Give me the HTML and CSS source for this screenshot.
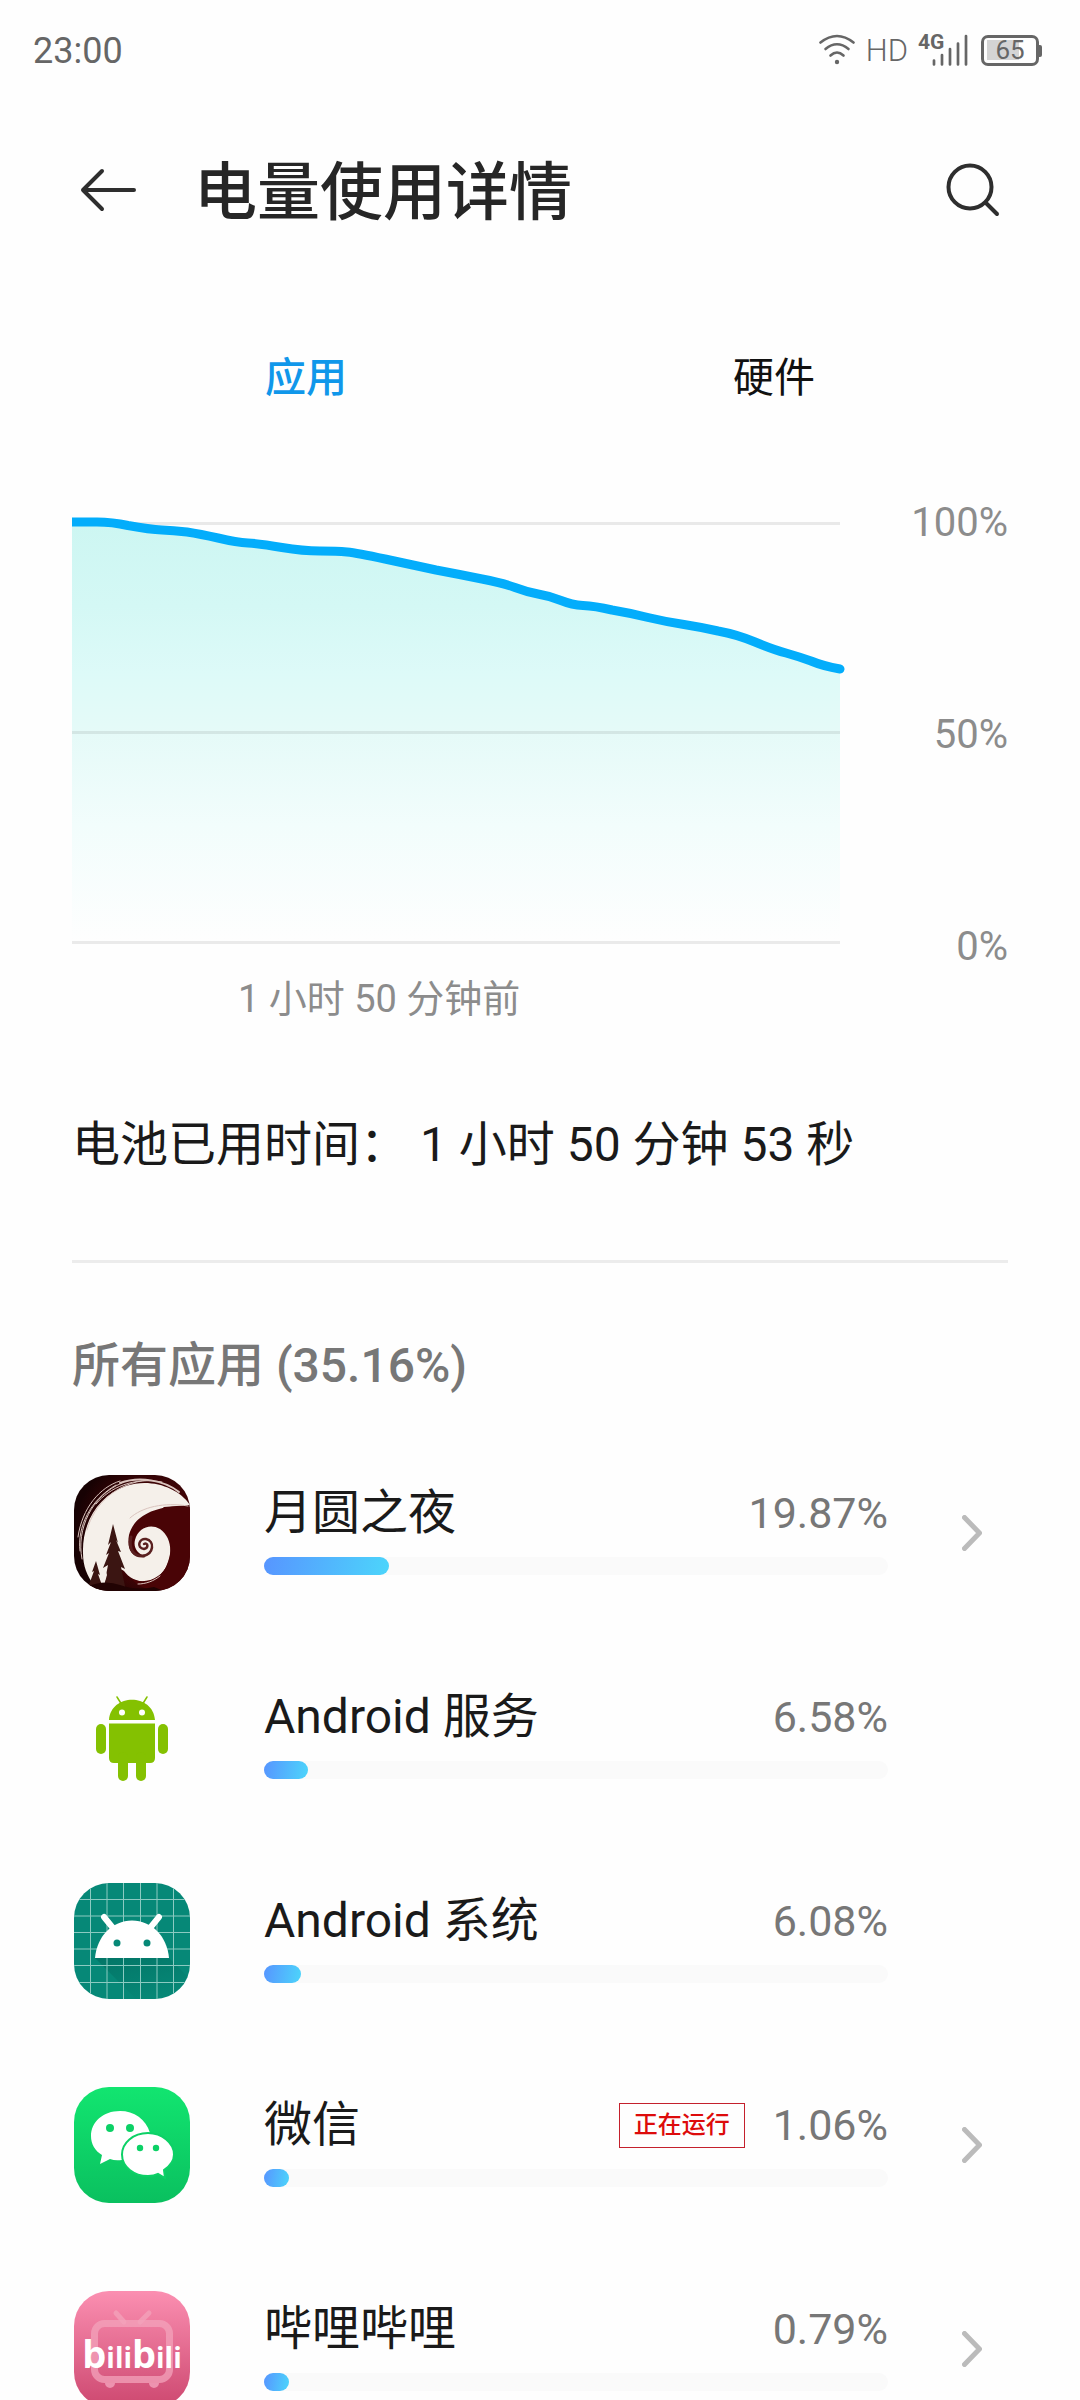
FILE: index.html
```html
<!DOCTYPE html>
<html lang="zh-CN">
<head>
<meta charset="utf-8">
<meta name="viewport" content="width=device-width, initial-scale=1">
<title>电量使用详情</title>
<link rel="stylesheet" href="styles.css">
</head>
<body>
<div class="screen">
  <div class="status">
    <span class="status-time">23:00</span>
    <div class="status-icons">
      <svg class="wifi" viewBox="0 0 36 32" aria-label="Wi-Fi">
        <g fill="none" stroke="#666" stroke-width="2.6" stroke-linecap="round">
          <path d="M1.500 8.500Q18-4.500 34.500 8.500"/><path d="M6.500 15Q18 5.500 29.500 15"/><path d="M11.500 21.500Q18 15.500 24.500 21.500"/>
        </g>
        <circle cx="18" cy="28" r="2.200" fill="#666"/>
      </svg>
      <span class="hd">HD</span>
      <div class="signal">
        <span class="network">4G</span>
        <svg class="bars" viewBox="0 0 36 32" aria-hidden="true">
          <path d="M2 26.500V30.500M10 21V30.500M18 15V30.500M26 9.500V30.500M34 2V30.500" stroke="#666" stroke-width="2.700" stroke-linecap="round"/>
        </svg>
      </div>
      <div class="battery"><span class="battery-level">65</span></div>
    </div>
  </div>

  <header class="header">
    <button class="icon-button" type="button" aria-label="返回">
      <svg class="back-icon" viewBox="0 0 56 44"><path d="M22 3L3 22L22 41M3 22H54" fill="none" stroke="#2e2e2e" stroke-width="4" stroke-linecap="round" stroke-linejoin="round"/></svg>
    </button>
    <h1 class="title">电量使用详情</h1>
    <button class="icon-button" type="button" aria-label="搜索">
      <svg class="search-icon" viewBox="0 0 54 54"><g fill="none" stroke="#2e2e2e" stroke-width="4" stroke-linecap="round"><circle cx="24" cy="24" r="21.500"/><path d="M40 40L51 51"/></g></svg>
    </button>
  </header>

  <nav class="tabs">
    <button class="tab tab-active" type="button">应用</button>
    <button class="tab" type="button">硬件</button>
  </nav>

  <main class="content">
    <section class="chart">
      <div class="chart-plot">
        <svg class="chart-svg" viewBox="0 0 768 445" role="img" aria-label="电量曲线">
          <defs>
            <linearGradient id="area" gradientUnits="userSpaceOnUse" x1="0" y1="22" x2="0" y2="442">
              <stop offset="0" stop-color="#cdf6f2"/><stop offset=".2" stop-color="#d4f8f5"/><stop offset=".36" stop-color="#ddfaf8"/><stop offset=".5" stop-color="#e5faf8"/><stop offset=".72" stop-color="#f2fdfc"/><stop offset="1" stop-color="#fefefe"/>
            </linearGradient>
            <clipPath id="plot"><rect x="0" y="0" width="780" height="445"/></clipPath>
          </defs>
          <path d="M0 23.500H768" stroke="#e9e9e9" stroke-width="3"/>
          <path fill="url(#area)" d="M0 22H25Q40 22 56 25.500Q78 29.500 90 30Q101 30.500 115 32Q128 34 146 38Q165 42.500 176 43Q188 43.500 210 47.500Q231 51 248 51Q265 51 275 52Q285 53 313 59Q341 65 364 70Q388 74.500 410 79Q431 83 443 87.500Q455 92 466 94Q478 96 489 100.500Q500 105 511 105.500Q523 106 540 110Q558 113 576 117.500Q595 122 612 124.500Q628 127 646 131Q665 134.500 683 142Q701 149.500 714 153Q728 157 739 161Q751 166 768 169V442H0Z"/>
          <path d="M0 232.500H768M0 442.500H768" stroke="#000" stroke-opacity=".08" stroke-width="3"/>
          <path clip-path="url(#plot)" fill="none" stroke="#03adfb" stroke-width="9" stroke-linecap="round" d="M0 22H25Q40 22 56 25.500Q78 29.500 90 30Q101 30.500 115 32Q128 34 146 38Q165 42.500 176 43Q188 43.500 210 47.500Q231 51 248 51Q265 51 275 52Q285 53 313 59Q341 65 364 70Q388 74.500 410 79Q431 83 443 87.500Q455 92 466 94Q478 96 489 100.500Q500 105 511 105.500Q523 106 540 110Q558 113 576 117.500Q595 122 612 124.500Q628 127 646 131Q665 134.500 683 142Q701 149.500 714 153Q728 157 739 161Q751 166 768 169"/>
        </svg>
        <p class="chart-caption">1 小时 50 分钟前</p>
      </div>
      <div class="chart-scale"><span>100%</span><span>50%</span><span>0%</span></div>
    </section>

    <p class="duration">电池已用时间： 1 小时 50 分钟 53 秒</p>

    <section class="apps">
      <h2 class="apps-title">所有应用 (35.16%)</h2>
      <ul class="app-list">
        <li>
          <a class="app" href="#night">
            <svg class="app-icon" viewBox="0 0 116 116" aria-hidden="true">
              <defs>
                <clipPath id="round"><rect width="116" height="116" rx="35"/></clipPath>
                <radialGradient id="wine" cx=".7" cy=".5" r=".7"><stop offset="0" stop-color="#5c0508"/><stop offset=".6" stop-color="#3f0406"/><stop offset="1" stop-color="#170203"/></radialGradient>
              </defs>
              <g clip-path="url(#round)">
                <rect width="116" height="116" fill="url(#wine)"/>
                <path fill="#f5f0ea" d="M116 30C104 12 76 3 52 11C24 21 8 48 9 78C9 91 13 101 20 110L38 108Q44 90 50 96C60 110 82 111 92 92C106 60 86 42 68 50L90 32Z"/>
                <path fill="#490406" d="M116 32C84 29 60 40 55 60C52 76 60 84 71 81C64 79 59 73 61 65C64 53 76 48 86 54C101 64 99 91 84 101C76 107 64 108 57 103Q66 116 90 116H116Z"/>
                <g fill="none" stroke="#5a2020" stroke-linecap="round">
                  <path stroke-width="3" d="M57 62C54 76 61 82 70 81"/>
                  <path stroke-width="2.500" d="M69 81C80 79 81 66 72 64C65 63 62 73 70 74C75 73 74 67 70 69"/>
                </g>
                <g fill="none" stroke="#d9c3bd" stroke-width="1" stroke-linecap="round">
                  <path d="M8 84C2 54 18 20 48 8M6 76C3 52 16 25 42 10M13 55C20 29 42 8 74 5M22 29C36 12 60 2 88 7M4 62C8 33 26 12 46 6M56 43C68 32 90 27 114 31M64 109C72 109 80 106 86 101"/>
                  <path stroke-width="2" d="M46 8C65 1 90 5 105 17"/>
                </g>
                <path fill="#3b1512" d="M39 49L34 70L37 67L32 80L35 78L29 93L34 90L29 116H52L47 92L51 94L44 76L47 77L42 65L44 68ZM22 86L18 97L20 96L16 107L12 116H30L24 99L26 100Z"/>
                <path fill="#f5f0ea" d="M26 100L30 110L33 100L31 94Z"/>
                <path fill="#210303" d="M12 112Q30 104 46 110T80 112L90 116H8Z"/>
              </g>
            </svg>
            <div class="app-body">
              <div class="app-line"><span class="app-name">月圆之夜</span><span class="app-share">19.87%</span></div>
              <div class="track"><div class="fill" style="width:20%"></div></div>
            </div>
            <svg class="chevron" viewBox="0 0 20 36" aria-hidden="true"><path d="M2.500 2.500L17.500 18L2.500 33.500"/></svg>
          </a>
        </li>
        <li class="app">
          <svg class="app-icon" viewBox="0 0 116 116" aria-hidden="true">
            <g fill="#84c101">
              <path d="M35 41C37 14 79 14 81 41ZM35 44.500H81V79Q81 84 76 84H40Q35 84 35 79Z"/>
              <rect x="22" y="45" width="10" height="30" rx="5"/><rect x="84" y="45" width="10" height="30" rx="5"/>
              <rect x="44" y="73" width="10" height="29" rx="5"/><rect x="62" y="73" width="10" height="29" rx="5"/>
              <path d="M43 18L48 26M73 18L68 26" stroke="#84c101" stroke-width="1.500" stroke-linecap="round"/>
            </g>
            <circle cx="48" cy="33.500" r="3" fill="#fff"/><circle cx="68" cy="33.500" r="3" fill="#fff"/>
          </svg>
          <div class="app-body">
            <div class="app-line"><span class="app-name">Android 服务</span><span class="app-share">6.58%</span></div>
            <div class="track"><div class="fill" style="width:7%"></div></div>
          </div>
        </li>
        <li class="app">
          <svg class="app-icon" viewBox="0 0 116 116" aria-hidden="true">
            <defs><linearGradient id="shade" x1="0" y1="0" x2=".6" y2="1"><stop offset="0" stop-color="#00695c" stop-opacity=".6"/><stop offset="1" stop-color="#00695c" stop-opacity="0"/></linearGradient></defs>
            <g clip-path="url(#round)">
              <rect width="116" height="116" fill="#068877"/>
              <path d="M21 75L62 116H116V96L95 75Z" fill="url(#shade)"/>
              <path d="M16.500 0V116M33 0V116M49.500 0V116M66.500 0V116M83 0V116M99.500 0V116M0 16.500H116M0 33H116M0 49.500H116M0 66H116M0 82.500H116M0 99.500H116" stroke="#8bcac1" stroke-width="1"/>
              <path d="M21 75C23 53 38 38 58 37.500C78 38 93 53 95 75Z" fill="#fff"/>
              <path d="M30 34L39 45M85 34L76 45" stroke="#fff" stroke-width="6" stroke-linecap="round"/>
              <circle cx="43" cy="60" r="3.500" fill="#068877"/><circle cx="73" cy="60" r="3.500" fill="#068877"/>
            </g>
          </svg>
          <div class="app-body">
            <div class="app-line"><span class="app-name">Android 系统</span><span class="app-share">6.08%</span></div>
            <div class="track"><div class="fill" style="width:6%"></div></div>
          </div>
        </li>
        <li>
          <a class="app" href="#wechat">
            <svg class="app-icon" viewBox="0 0 116 116" aria-hidden="true">
              <defs><linearGradient id="green" x1="0" y1="0" x2="0" y2="1"><stop offset="0" stop-color="#12e570"/><stop offset="1" stop-color="#0ac05f"/></linearGradient></defs>
              <rect width="116" height="116" rx="35" fill="url(#green)"/>
              <path fill="#fff" d="M46 24C29 24 17 35 17 49C17 57 21 64 28 68L26 77L36 72Q41 74 48 73L76 46C72 32 60 24 46 24Z"/>
              <path fill="#fff" stroke="#0cd166" stroke-width="2" d="M74 46C59 46 48 56 48 67.500C48 80 60 89 74 89Q80 89 84 87L91 91L90 83C96 79 100 74 100 67.500C100 56 88 46 74 46Z"/>
              <g fill="#0cd166"><circle cx="36" cy="41" r="4"/><circle cx="56" cy="41" r="4"/><circle cx="66" cy="61" r="3.200"/><circle cx="82" cy="61" r="3.200"/></g>
            </svg>
            <div class="app-body">
              <div class="app-line"><span class="app-name">微信</span><span class="app-tag">正在运行</span><span class="app-share">1.06%</span></div>
              <div class="track"><div class="fill" style="width:4%"></div></div>
            </div>
            <svg class="chevron" viewBox="0 0 20 36" aria-hidden="true"><path d="M2.500 2.500L17.500 18L2.500 33.500"/></svg>
          </a>
        </li>
        <li>
          <a class="app" href="#bilibili">
            <svg class="app-icon" viewBox="0 0 116 116" aria-hidden="true">
              <defs><linearGradient id="pink" x1="0" y1="0" x2="0" y2="1"><stop offset="0" stop-color="#fb8fb1"/><stop offset="1" stop-color="#cd4870"/></linearGradient></defs>
              <rect width="116" height="116" rx="35" fill="url(#pink)"/>
              <g fill="none" stroke="#f3a3bb" stroke-opacity=".75">
                <rect x="20.500" y="32.500" width="75" height="56" rx="10" stroke-width="7"/>
                <path d="M42 22L50 31M75 22L66 31" stroke-width="5" stroke-linecap="round"/>
              </g>
              <path d="M31 92A5 5 0 0 0 41 92ZM75 92A5 5 0 0 0 85 92Z" fill="#f3a3bb" fill-opacity=".8"/>
              <text class="bili-word" x="58" y="77" text-anchor="middle"><tspan class="bili-tall">b</tspan>ili<tspan class="bili-tall">b</tspan>ili</text>
            </svg>
            <div class="app-body">
              <div class="app-line"><span class="app-name">哔哩哔哩</span><span class="app-share">0.79%</span></div>
              <div class="track"><div class="fill" style="width:4%"></div></div>
            </div>
            <svg class="chevron" viewBox="0 0 20 36" aria-hidden="true"><path d="M2.500 2.500L17.500 18L2.500 33.500"/></svg>
          </a>
        </li>
      </ul>
    </section>
  </main>
</div>
</body>
</html>
```
FILE: styles.css
```css
* { box-sizing: border-box; }

body {
  margin: 0;
  background: #fefefe;
  color: #1a1a1a;
  font-family: Roboto, "Noto Sans CJK SC", sans-serif;
}

h1, h2, p, ul { margin: 0; padding: 0; font-weight: 400; }
ul { list-style: none; }
a { color: inherit; text-decoration: none; }
svg { display: block; }

button {
  padding: 0;
  border: 0;
  background: none;
  color: inherit;
  font: inherit;
}

.screen {
  display: flex;
  flex-direction: column;
  height: 100vh;
  overflow: hidden;
}

/* Status bar */
.status {
  display: flex;
  flex: none;
  align-items: center;
  justify-content: space-between;
  height: 100px;
  padding: 0 38px 0 33px;
  color: #666;
}

.status-time { padding-top: 2px; font-size: 36px; }
.status-icons { display: flex; align-items: center; }
.wifi { width: 36px; height: 32px; }
.hd { margin-left: 11px; font-size: 31px; font-weight: 300; }
.signal { position: relative; margin-left: 24px; }
.bars { width: 36px; height: 32px; }

.network {
  position: absolute;
  top: -4px;
  left: -14px;
  font-size: 21px;
  font-weight: 700;
  line-height: 24px;
}

.battery {
  position: relative;
  display: flex;
  align-items: center;
  justify-content: center;
  width: 58px;
  height: 31px;
  margin: 0 3px 0 13px;
  border: 3px solid #666;
  border-radius: 7px;
  background: linear-gradient(#d4d4d4, #d4d4d4) 3px center / 32px 20px no-repeat;
}

.battery::after {
  content: "";
  position: absolute;
  top: 7px;
  right: -6px;
  width: 4px;
  height: 12px;
  border-radius: 0 2px 2px 0;
  background: #666;
}

.battery-level { font-size: 26px; line-height: 26px; }

/* Title bar */
.header {
  display: flex;
  flex: none;
  align-items: center;
  height: 180px;
  padding: 0 80px;
}

.back-icon { width: 56px; height: 44px; }
.search-icon { width: 54px; height: 54px; }

.title {
  flex: 1;
  padding-top: 6px;
  margin-left: 58px;
  color: #262626;
  font-size: 63px;
  font-weight: 500;
  line-height: 90px;
}

.tabs {
  display: flex;
  flex: none;
  height: 194px;
  padding: 0 72px 6px;
}

.tab { flex: 1; color: #111; font-size: 41px; }
.tab-active { color: #1097ea; font-weight: 500; }

.content {
  flex: 1;
  min-height: 0;
  padding: 26px 72px 0;
  overflow: hidden;
}

/* Battery chart */
.chart { display: flex; align-items: flex-start; color: #8c8c8c; font-size: 38px; }
.chart-plot { flex: 1; }
.chart-svg { width: 100%; overflow: visible; }
.chart-caption { margin-top: 30px; padding-left: 166px; line-height: 48px; }

.chart-scale {
  display: flex;
  flex-direction: column;
  justify-content: space-between;
  width: 168px;
  height: 468px;
  padding-top: 2px;
  font-size: 40px;
  line-height: 42px;
  text-align: right;
}

.duration { margin-top: 86px; font-size: 48px; line-height: 72px; }

/* App list */
.apps { margin-top: 79px; padding-top: 67px; border-top: 3px solid #ececec; }
.apps-title { color: #777; font-size: 48px; font-weight: 500; line-height: 72px; }
.app-list { margin-top: 29px; }

.app {
  display: grid;
  grid-template-columns: 192px 1fr 120px;
  align-items: center;
  height: 204px;
}

.app-icon { width: 116px; height: 116px; margin-left: 2px; }
.app-body { padding-bottom: 10px; }
.app-line { display: flex; align-items: center; height: 60px; padding-top: 4px; }
.app-name { flex: 1; font-size: 48px; line-height: 60px; }
.app-share { color: #777; font-size: 43px; }

.app-tag {
  margin-right: 28px;
  padding: 0 14px;
  border: 1px solid #c4202c;
  color: #dd0b0b;
  font-size: 24px;
  font-weight: 500;
  line-height: 43px;
}

.track {
  height: 18px;
  margin-top: 16px;
  border-radius: 9px;
  background: #fafafa;
}

.fill {
  height: 18px;
  border-radius: 9px;
  background: linear-gradient(100deg, #5795ff, #4cd5fb);
}

.chevron {
  justify-self: end;
  width: 20px;
  height: 36px;
  margin-right: 26px;
  fill: none;
  stroke: #bbb;
  stroke-width: 5px;
  stroke-linecap: round;
  stroke-linejoin: round;
}

.bili-word {
  fill: #fff;
  font-family: "Open Sans", sans-serif;
  font-size: 28px;
  font-weight: 700;
}

.bili-tall { font-size: 38px; }
```
